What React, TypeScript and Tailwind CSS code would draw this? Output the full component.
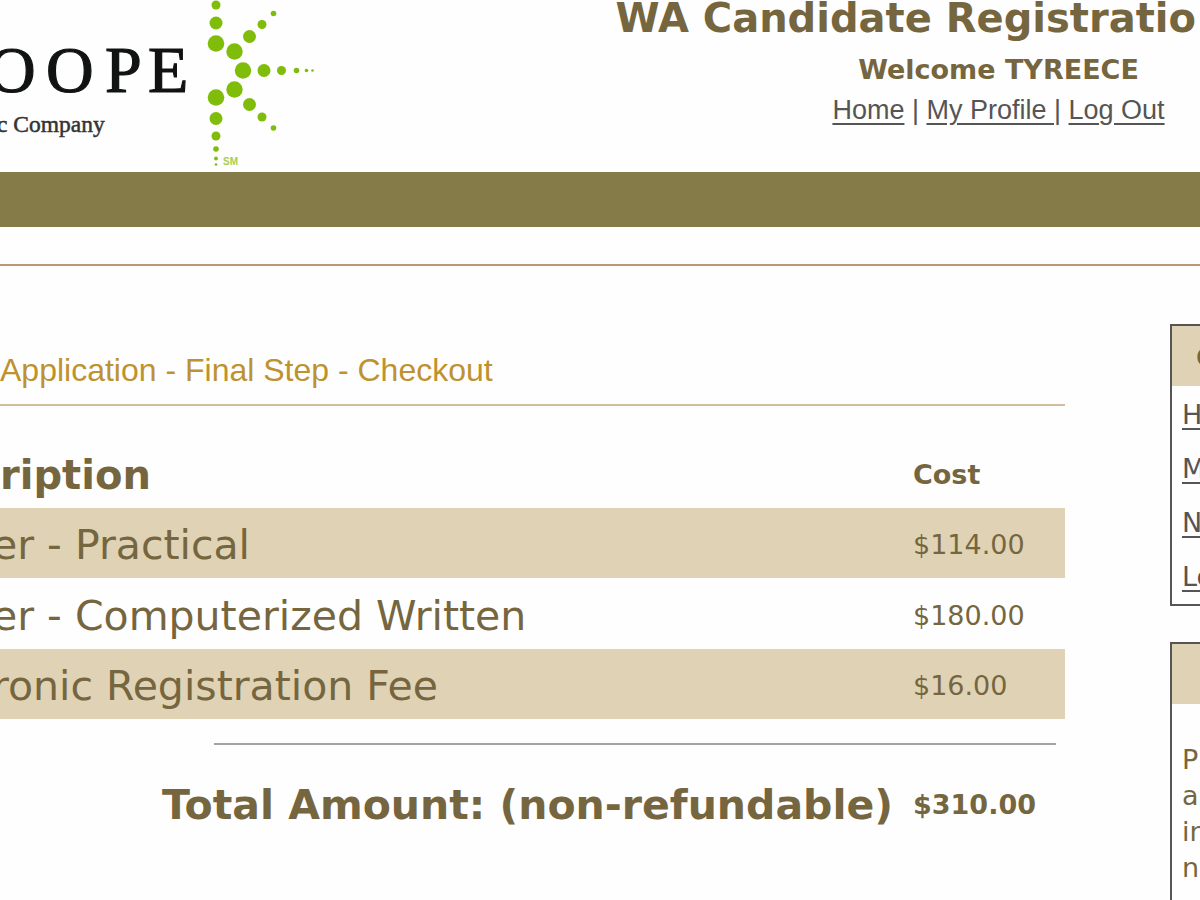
const dots: [number, number, number][] = [
  [216, 5, 4.5], [216, 23, 6.5], [216, 43.5, 8.3], [234.5, 51.5, 8.2], [249.5, 36.5, 6.5],
  [262, 24.5, 4.5], [273.5, 13.5, 2.8], [243, 70.5, 8.2], [264, 70.5, 6.5], [281.5, 70.5, 4.5],
  [296.5, 70.5, 2.8], [306.5, 70.5, 1.8], [312.5, 70.5, 1.3], [234.5, 89.5, 8.2], [249.5, 104.5, 6.5],
  [262, 117, 4.5], [273.5, 128, 2.8], [216, 97.5, 8.3], [216, 118.5, 6.5], [216, 136, 4.5],
  [216, 149, 2.8], [216, 158.5, 1.9], [216, 164.5, 1.3],
];

const fees = [
  { name: "er - Practical", cost: "$114.00" },
  { name: "er - Computerized Written", cost: "$180.00" },
  { name: "ronic Registration Fee", cost: "$16.00" },
];

const menu = ["Ho", "M", "N", "Lo"];
const notice = ["Pl", "al", "in", "no"];

function Logo() {
  return (
    <svg width="330" height="172" viewBox="0 0 330 172" className="block shrink-0" role="img" aria-label="Logo">
      <g fontFamily="'Liberation Serif', serif" fontSize="66" fill="#111312" stroke="#111312" strokeWidth="1.2">
        <text x="-12" y="92">O</text>
        <text x="46" y="92">O</text>
        <text x="105" y="92">P</text>
        <text x="148" y="92">E</text>
      </g>
      <text x="-3" y="132" fontFamily="'Liberation Serif', serif" fontSize="23.5" fill="#333" stroke="#333" strokeWidth="0.5">c Company</text>
      <g fill="#80bc0a">
        {dots.map(([x, y, r], i) => (
          <circle key={i} cx={x} cy={y} r={r} />
        ))}
      </g>
      <text x="223" y="165" fontFamily="'Liberation Sans', sans-serif" fontWeight="bold" fontSize="10" fill="#a3d052">SM</text>
    </svg>
  );
}

export default function App() {
  return (
    <div className="min-h-screen overflow-hidden bg-[#fefefe] font-['DejaVu_Sans',sans-serif] text-[#75663f]">
      <header className="flex h-[172px] justify-between">
        <Logo />
        <div className="flex flex-col items-end whitespace-nowrap">
          <h1 className="pr-1 text-[40px] leading-9 font-bold">WA Candidate Registratio</h1>
          <div className="w-[403px] pt-[14px] text-center">
            <p className="text-[27px] leading-10 font-bold">Welcome TYREECE</p>
            <nav className="font-['Liberation_Sans',sans-serif] text-[27px] leading-10 whitespace-pre text-[#555]">
              <a href="#home" className="underline underline-offset-4">Home</a>
              {" | "}
              <a href="#profile" className="underline underline-offset-4">{"My Profile "}</a>
              {"| "}
              <a href="#logout" className="underline underline-offset-4">Log Out</a>
            </nav>
          </div>
        </div>
      </header>
      <div className="h-[55px] bg-[#857b49]" />
      <div className="mt-9 h-[3px] border-b-2 border-[#b89a78]" />

      <div className="flex">
        <main className="min-w-0 flex-1 pt-[82px]">
          <h2 className="border-b-2 border-[#d0bd9b] pb-3 font-['Liberation_Sans',sans-serif] text-[32px] leading-11 text-[#bd922f]">
            Application - Final Step - Checkout
          </h2>
          <table className="mt-9 w-full table-fixed border-collapse text-left whitespace-nowrap">
            <thead>
              <tr className="h-[66px]">
                <th className="text-[40px] leading-10 font-bold">ription</th>
                <th className="w-[152px] text-[27px] leading-10 font-bold">Cost</th>
              </tr>
            </thead>
            <tbody>
              {fees.map((fee) => (
                <tr key={fee.name} className="h-[70px] odd:bg-[#e0d3b5] even:h-[71px]">
                  <td className="pt-1 text-[41px] leading-10">
                    <span className="-ml-2">{fee.name}</span>
                  </td>
                  <td className="pt-1 text-[27px] leading-10">{fee.cost}</td>
                </tr>
              ))}
            </tbody>
          </table>
          <div className="mt-6 mr-[9px] ml-[214px] border-t-2 border-[#a3a3a3]" />
          <div className="mt-9 flex items-center justify-end font-bold whitespace-nowrap">
            <span className="pr-5 text-[41px] leading-12">Total Amount: (non-refundable)</span>
            <span className="w-[152px] text-[27px] leading-12">$310.00</span>
          </div>
        </main>

        <aside className="ml-[105px] w-[30px] shrink-0 pt-[58px] text-[27px] whitespace-nowrap">
          <section className="h-[282px] overflow-hidden border-2 border-r-0 border-[#555]">
            <h3 className="h-[60px] bg-[#e0d3b5] pl-6 leading-[64px] font-bold">C</h3>
            <ul className="pl-[10px] text-[#555]">
              {menu.map((item) => (
                <li key={item} className="h-[54px] leading-[58px]">
                  <a href="#menu" className="underline underline-offset-4">{item}</a>
                </li>
              ))}
            </ul>
          </section>
          <section className="mt-9 h-[264px] overflow-hidden border-2 border-r-0 border-b-0 border-[#555]">
            <div className="h-[60px] bg-[#e0d3b5]" />
            <div className="pt-[38px] pl-[10px] leading-9">
              {notice.map((line) => (
                <p key={line}>{line}</p>
              ))}
            </div>
          </section>
        </aside>
      </div>
    </div>
  );
}
